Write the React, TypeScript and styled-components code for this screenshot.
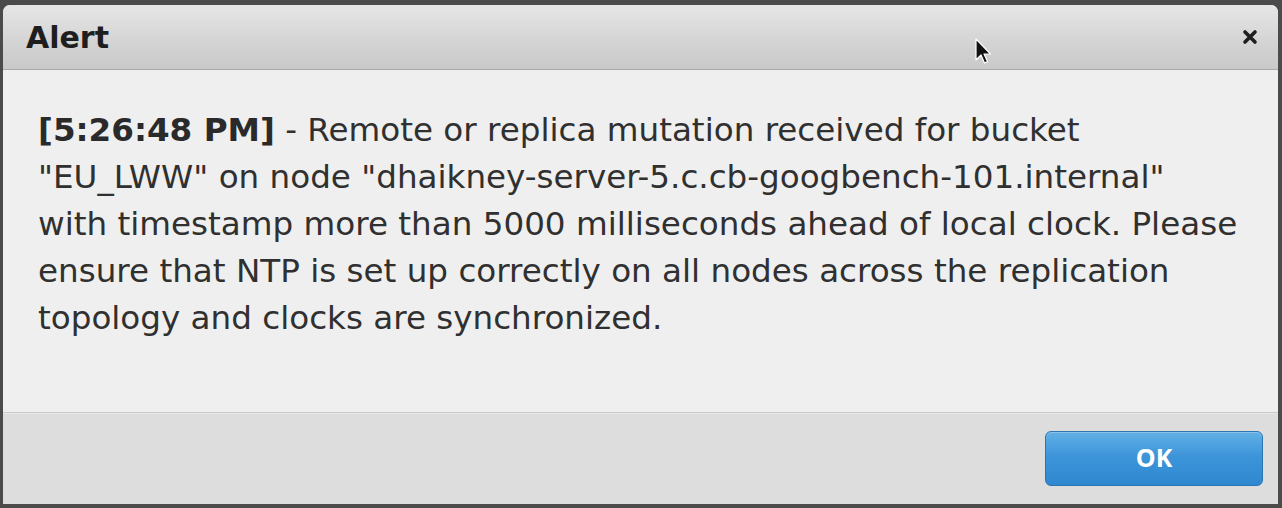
import React, { FC } from 'react';
import styled, { createGlobalStyle } from 'styled-components';

const GlobalStyle = createGlobalStyle`
    html, body {
        margin: 0;
        padding: 0;
        background: #4b4b4b;
    }
    * {
        box-sizing: border-box;
    }
`;

const Frame = styled.div`
    position: relative;
    width: 1282px;
    height: 508px;
    padding: 5px 4px 4px 3px;
    background: #4b4b4b;
    overflow: hidden;
`;

const Dialog = styled.div`
    display: flex;
    flex-direction: column;
    height: 100%;
    background: #efefef;
    border-radius: 7px 7px 0 0;
    overflow: hidden;
    font-family: 'DejaVu Sans', Verdana, sans-serif;
`;

const Header = styled.div`
    display: flex;
    align-items: center;
    justify-content: space-between;
    height: 65px;
    padding: 0 18px 0 23px;
    background: linear-gradient(to bottom, #e6e6e6 0%, #d6d6d6 50%, #c9c9c9 100%);
    border-bottom: 1px solid #a9a9a9;
`;

const Title = styled.h1`
    margin: 0;
    font-size: 30px;
    font-weight: bold;
    color: #1e1e1e;
`;

const CloseButton = styled.button`
    display: flex;
    align-items: center;
    justify-content: center;
    width: 20px;
    height: 20px;
    padding: 0;
    border: none;
    background: transparent;
    cursor: pointer;
`;

const Body = styled.div`
    flex: 1;
    padding: 37px 20px 0 35px;
    font-size: 32.6px;
    line-height: 47px;
    color: #303030;
    white-space: nowrap;
`;

const Stamp = styled.strong`
    font-weight: bold;
    color: #2a2a2a;
`;

const Footer = styled.div`
    display: flex;
    align-items: center;
    justify-content: flex-end;
    height: 92px;
    padding: 0 15px 0 0;
    background: #dcdddc;
    border-top: 1px solid #c9c9c9;
    box-shadow: inset 0 1px 0 #e8e8e8;
`;

const OkButton = styled.button`
    width: 218px;
    height: 55px;
    padding: 0 0 3px;
    border: 1px solid #2c76b4;
    border-radius: 6px;
    background: linear-gradient(to bottom, #62b0e6 0%, #3d95d9 45%, #2f87d0 100%);
    color: #ffffff;
    font-family: 'Open Sans', 'Liberation Sans', sans-serif;
    font-size: 25px;
    font-weight: bold;
    cursor: pointer;
    box-shadow: inset 0 1px 0 rgba(255, 255, 255, 0.25);
`;

const Cursor = styled.svg`
    position: absolute;
    left: 975px;
    top: 38px;
    pointer-events: none;
`;

const lines = [
    ' - Remote or replica mutation received for bucket',
    '"EU_LWW" on node "dhaikney-server-5.c.cb-googbench-101.internal"',
    'with timestamp more than 5000 milliseconds ahead of local clock. Please',
    'ensure that NTP is set up correctly on all nodes across the replication',
    'topology and clocks are synchronized.',
];

const App: FC = () => {
    return (
        <>
            <GlobalStyle />
            <Frame>
                <Dialog>
                    <Header>
                        <Title>Alert</Title>
                        <CloseButton aria-label="close">
                            <svg width="16" height="16" viewBox="0 0 16 16">
                                <path d="M3 3 L13 13 M13 3 L3 13" stroke="#1f1f1f" strokeWidth="3.6" strokeLinecap="round" />
                            </svg>
                        </CloseButton>
                    </Header>
                    <Body>
                        <Stamp>[5:26:48 PM]</Stamp>
                        {lines.map((line, i) => (
                            <React.Fragment key={i}>
                                {line}
                                {i < lines.length - 1 && <br />}
                            </React.Fragment>
                        ))}
                    </Body>
                    <Footer>
                        <OkButton>OK</OkButton>
                    </Footer>
                </Dialog>
                <Cursor width="16" height="28" viewBox="0 0 16 28">
                    <path d="M1 1 L1 22 L6 17 L9.5 25 L12.5 23.6 L9 16 L15.5 16 Z" fill="#111" stroke="#fff" strokeWidth="1.2" strokeLinejoin="round" />
                </Cursor>
            </Frame>
        </>
    );
};

export default App;
